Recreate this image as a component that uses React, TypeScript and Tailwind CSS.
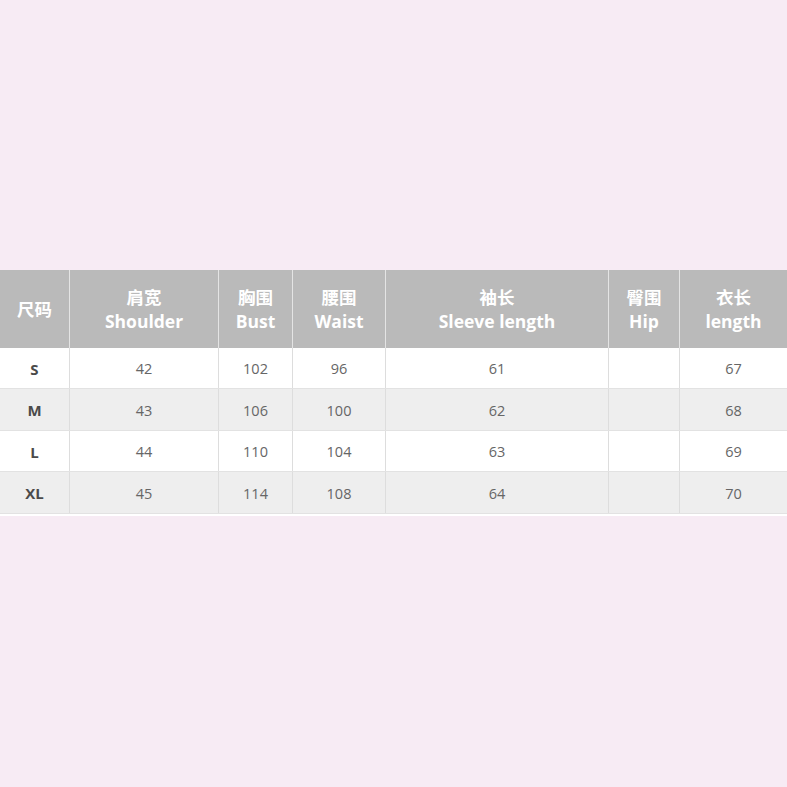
const cols = ['w-[69px]', 'w-[149px]', 'w-[74px]', 'w-[93px]', 'w-[223px]', 'w-[71px]', 'w-[108px]']

const head: [string, string][] = [
  ['尺码', ''],
  ['肩宽', 'Shoulder'],
  ['胸围', 'Bust'],
  ['腰围', 'Waist'],
  ['袖长', 'Sleeve length'],
  ['臀围', 'Hip'],
  ['衣长', 'length'],
]

const rows = [
  ['S', '42', '102', '96', '61', '', '67'],
  ['M', '43', '106', '100', '62', '', '68'],
  ['L', '44', '110', '104', '63', '', '69'],
  ['XL', '45', '114', '108', '64', '', '70'],
]

const rowH = ['h-[41px]', 'h-[42px]', 'h-[41px]', 'h-[42px]']

export default function App() {
  return (
    <div
      className="flex h-[787px] w-[787px] flex-col bg-[#f7ebf4] pt-[270px]"
      style={{ fontFamily: '"Open Sans", "Noto Sans CJK SC", sans-serif' }}
    >
      <div className="flex h-[78px] bg-[#bababa]">
        {head.map(([zh, en], i) => (
          <div
            key={i}
            className={`${cols[i]} flex flex-col items-center justify-center border-l border-[#e4e4e4] text-[17.5px] font-bold leading-[24px] text-white first:border-l-0`}
          >
            <span>{zh}</span>
            {en && <span>{en}</span>}
          </div>
        ))}
      </div>
      {rows.map((r, ri) => (
        <div
          key={ri}
          className={`flex ${rowH[ri]} border-b border-[#e2e2e2] ${ri % 2 ? 'bg-[#eeeeee]' : 'bg-white'}`}
        >
          {r.map((c, ci) => (
            <div
              key={ci}
              className={`${cols[ci]} flex items-center justify-center border-l border-[#dddddd] pt-[2px] first:border-l-0 ${
                ci === 0 ? 'text-[15px] font-bold text-[#4a4a4a]' : 'text-[14.5px] text-[#666666]'
              }`}
            >
              {c}
            </div>
          ))}
        </div>
      ))}
      <div className="h-[2px] bg-white" />
    </div>
  )
}
